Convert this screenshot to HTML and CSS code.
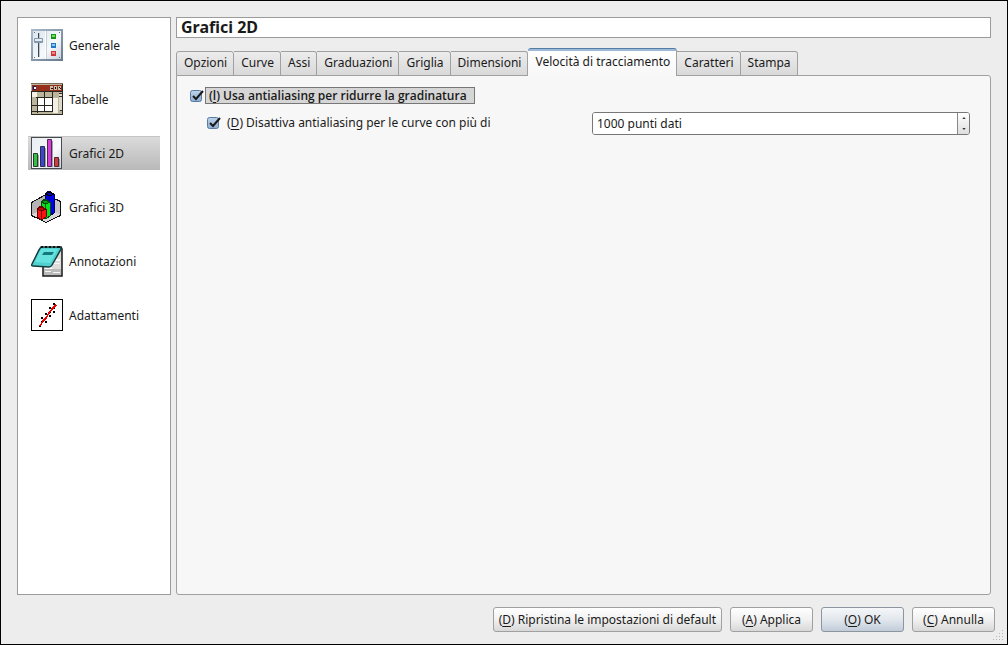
FILE: index.html
```html
<!DOCTYPE html>
<html lang="it">
<head>
<meta charset="utf-8">
<title>Preferenze</title>
<link rel="stylesheet" href="styles.css">
</head>
<body>
<form class="dialog">
  <div class="main">
    <nav class="sections">
      <button type="button" class="section">
        <svg class="icon" viewBox="0 0 32 32" aria-hidden="true">
          <defs>
            <linearGradient id="plate" x1="0" y1="0" x2="1" y2="1"><stop offset="0" stop-color="#dce5ee"/><stop offset=".6" stop-color="#f6f9fb"/><stop offset="1" stop-color="#c8d2dd"/></linearGradient>
            <linearGradient id="rim" x1="0" y1="0" x2="1" y2="1"><stop offset="0" stop-color="#a9bacb"/><stop offset="1" stop-color="#68798c"/></linearGradient>
          </defs>
          <rect width="32" height="32" fill="url(#rim)"/>
          <rect x="2" y="2" width="28" height="28" fill="url(#plate)"/>
          <path d="M14 2h1v28h-1z" fill="#fff"/><path d="M15 2h1v28h-1z" fill="#c6cfd8"/>
          <path d="M3 3h1v1H3zM28 3h1v1h-1zM3 28h1v1H3zM28 28h1v1h-1z" fill="#66717c"/>
          <path d="M7 4h1v24H7z" fill="#3b4650"/><path d="M8 4h1v24H8z" fill="#bcc6cf"/>
          <rect x="3" y="9" width="9" height="5" rx="1" fill="#8597aa"/><rect x="4" y="10" width="7" height="2" fill="#e5edf3"/>
          <rect x="20" y="5" width="5" height="5" fill="#169314"/><rect x="21" y="6" width="3" height="2" fill="#70df5c"/>
          <rect x="20" y="14" width="5" height="5" fill="#2675c9"/><rect x="21" y="15" width="3" height="2" fill="#86c7f4"/>
          <rect x="20" y="22" width="5" height="5" fill="#cc3535"/><rect x="21" y="23" width="3" height="2" fill="#f28b82"/>
        </svg>
        <span>Generale</span>
      </button>
      <button type="button" class="section">
        <svg class="icon" viewBox="0 0 32 32" shape-rendering="crispEdges" aria-hidden="true">
          <path d="M0 0h32v32H0z" fill="#bbb59c"/>
          <path d="M0 0h32v1H0z" fill="#7a6b5d"/>
          <path d="M1 2h30v6H1z" fill="#96301c"/>
          <path d="M2 3h3v4H2z" fill="#171f68"/><path d="M3 4h2v2H3z" fill="#fff"/>
          <path d="M19 3h3v4h-3zM23 3h3v4h-3zM27 3h3v4h-3z" fill="#c8c0aa"/>
          <path d="M20 5h2v1h-2zM24 4h1v2h-1zM28 4h1v1h-1zM29 5h1v1h-1z" fill="#111"/>
          <path d="M1 9h5v5H1z" fill="#f4f1e8"/><path d="M6 15h16v14H6z" fill="#fff"/>
          <path d="M22 15h5v15h-5z" fill="#f2efe4"/><path d="M28 10h3v17h-3z" fill="#ded9c8"/>
          <path d="M0 8h32v1H0zM0 8h1v24H0zM31 1h1v31h-1zM5 14h17v1H5zM1 22h21v1H1zM1 28h21v1H1zM6 14h1v16H6zM13 9h1v20h-1zM21 9h1v20h-1zM0 31h32v1H0z" fill="#29251f"/>
          <path d="M28 10h3v1h-3zM28 13h3v1h-3zM29 27h2v1h-2z" fill="#333"/>
        </svg>
        <span>Tabelle</span>
      </button>
      <button type="button" class="section section-current" aria-current="page">
        <svg class="icon" viewBox="0 0 32 32" aria-hidden="true">
          <defs><linearGradient id="sheet" x1="0" y1="0" x2="1" y2="1"><stop offset="0" stop-color="#e7edf2"/><stop offset=".6" stop-color="#f9fafb"/><stop offset="1" stop-color="#cbd3da"/></linearGradient></defs>
          <rect x=".5" y=".5" width="30" height="31" fill="url(#sheet)" stroke="#464b50"/>
          <path d="M4 18h4v12H4zM11 11h4v19h-4zM18 4h4v26h-4zM25 22h4v8h-4z" fill="#9da3a8"/>
          <path d="M2.500 16.500h4v13h-4z" fill="#37bd45" stroke="#253d2b"/>
          <path d="M9.500 9.500h4v20h-4z" fill="#4145ca" stroke="#2b2c52"/>
          <path d="M16.500 2.500h4v27h-4z" fill="#d93adb" stroke="#4b294c"/>
          <path d="M23.500 20.500h4v9h-4z" fill="#cb3e43" stroke="#50292b"/>
        </svg>
        <span>Grafici 2D</span>
      </button>
      <button type="button" class="section">
        <svg class="icon" viewBox="0 0 32 32" shape-rendering="crispEdges" aria-hidden="true">
          <path d="M0 11 15 3l15 8v13l-15 8L0 24z" fill="#c6c6c6"/>
          <path d="M15 3v14L0 24V11z" fill="#b4b4b4"/><path d="m0 24 15-7 15 7-15 8z" fill="#d9d9d9"/>
          <path d="M.5 11.500 15 3.500l14.500 7v14L15 31.500.500 24.500z" fill="none" stroke="#111"/>
          <path d="m14 3 4-3 5 3v19l-4 3-5-3z" fill="#0000ed" stroke="#000060"/><path d="M18 5h1v20h-1z" fill="#000080"/><path d="m14 3 4-2 5 2-4 2z" fill="#0000b4" stroke="#000"/>
          <path d="m10 11 4-3 5 3v14l-4 3-5-3z" fill="#00e41c" stroke="#004b07"/><path d="M14 13h1v14h-1z" fill="#005509"/><path d="m10 11 4-2 5 2-4 2z" fill="#00a514" stroke="#004b07"/>
          <path d="m6 18 4-3 5 3v8l-5 3-4-3z" fill="#ff1111" stroke="#6c0000"/><path d="M10 19h1v9h-1z" fill="#710000"/><path d="m6 18 4-2 5 2-5 2z" fill="#ce0000" stroke="#600"/>
        </svg>
        <span>Grafici 3D</span>
      </button>
      <button type="button" class="section">
        <svg class="icon" viewBox="0 0 32 32" aria-hidden="true">
          <path d="M12 10 30 2l1 2v27H12z" fill="#ddd" stroke="#171717" stroke-width="1.500"/>
          <path d="M13 24h17v6H13z" fill="#bbb"/><path d="M14 22h7v2h-7zM22 27h7v1h-7zM24 14h5v2h-5zM23 18h6v1h-6zM14 26h6v1h-6z" fill="#f7f7f7"/>
          <path d="m10 2 19 0q2 1 0 4l-8 14q-1 2-3 2L2 21q-2 0-1-2L8 5z" fill="#50d0cf" stroke="#173c3e" stroke-width="1.500"/>
          <path d="m10 4 17 0-8 14L4 17z" fill="#67e3df"/><path d="m13 7 10 0-2 3-10 0z" fill="#16777c"/>
          <path d="M10 1h2v2h-2zM14 1h2v2h-2zM18 1h2v2h-2zM22 1h2v2h-2zM26 1h3v2h-3z" fill="#111"/>
        </svg>
        <span>Annotazioni</span>
      </button>
      <button type="button" class="section">
        <svg class="icon" viewBox="0 0 32 32" shape-rendering="crispEdges" aria-hidden="true">
          <path d="M.5.500h31v31H.500z" fill="#fff" stroke="#000"/>
          <path d="M8 26h2v2H8zM10 18h2v2h-2zM10 22h2v2h-2zM14 22h2v2h-2zM14 18h2v2h-2zM14 14h2v2h-2zM18 16h2v2h-2zM18 8h2v2h-2zM18 12h2v2h-2zM22 4h2v2h-2zM22 12h2v2h-2zM22 8h2v2h-2z" fill="#000"/>
          <path d="m9 27 3-5 3-3 3-5 3-4 4-4" fill="none" stroke="#e80000" stroke-width="1.500"/>
        </svg>
        <span>Adattamenti</span>
      </button>
    </nav>
    <div class="content">
      <h1 class="title">Grafici 2D</h1>
      <div class="tabs" role="tablist">
        <button type="button" role="tab" class="tab">Opzioni</button>
        <button type="button" role="tab" class="tab">Curve</button>
        <button type="button" role="tab" class="tab">Assi</button>
        <button type="button" role="tab" class="tab">Graduazioni</button>
        <button type="button" role="tab" class="tab">Griglia</button>
        <button type="button" role="tab" class="tab">Dimensioni</button>
        <button type="button" role="tab" class="tab tab-current" aria-selected="true">Velocità di tracciamento</button>
        <button type="button" role="tab" class="tab">Caratteri</button>
        <button type="button" role="tab" class="tab">Stampa</button>
      </div>
      <section class="panel" role="tabpanel">
        <div class="option">
          <input type="checkbox" class="check" id="antialias" checked>
          <label class="option-title" for="antialias">(<u>l</u>) Usa antialiasing per ridurre la gradinatura</label>
        </div>
        <div class="suboption">
          <div class="limit">
            <input type="checkbox" class="check" id="disable" checked>
            <label for="disable">(<u>D</u>) Disattiva antialiasing per le curve con più di</label>
          </div>
          <div class="spin">
            <input class="spin-value" type="text" value="1000 punti dati" aria-label="Numero massimo di punti dati">
            <div class="spin-steps">
              <button type="button" class="step" aria-label="Aumenta"><svg viewBox="0 0 5 3" aria-hidden="true"><path d="M0 3 2.500 0 5 3z"/></svg></button>
              <button type="button" class="step" aria-label="Diminuisci"><svg viewBox="0 0 5 3" aria-hidden="true"><path d="M0 0h5L2.500 3z"/></svg></button>
            </div>
          </div>
        </div>
      </section>
    </div>
  </div>
  <footer class="actions">
    <button type="button" class="action">(<u>D</u>) Ripristina le impostazioni di default</button>
    <button type="button" class="action">(<u>A</u>) Applica</button>
    <button type="button" class="action action-default">(<u>O</u>) OK</button>
    <button type="button" class="action">(<u>C</u>) Annulla</button>
  </footer>
  <svg class="grip" viewBox="0 0 11 11" shape-rendering="crispEdges" aria-hidden="true"><path d="M9 0h1v1H9zM9 3h1v1H9zM6 3h1v1H6zM9 6h1v1H9zM6 6h1v1H6zM3 6h1v1H3zM9 9h1v1H9zM6 9h1v1H6zM3 9h1v1H3zM0 9h1v1H0z"/></svg>
</form>
</body>
</html>
```
FILE: styles.css
```css
* { box-sizing: border-box; }

body {
  margin: 0;
  background: #ededed;
  color: #1a1a1a;
  font: 12px/16px "Noto Sans", "Open Sans", sans-serif;
}

button, input { font: inherit; color: inherit; margin: 0; }
button { padding: 0; border: 0; background: none; white-space: nowrap; }
u { text-underline-offset: 2px; }

.dialog {
  position: relative;
  display: flex;
  flex-direction: column;
  gap: 12px;
  min-height: 100vh;
  padding: 16px 12px 12px 16px;
  border: 1px solid #000;
}

.main {
  flex: 1;
  display: flex;
  gap: 5px;
  padding-right: 4px;
}

.sections {
  flex: 0 0 154px;
  display: flex;
  flex-direction: column;
  gap: 20px;
  padding: 10px;
  border: 1px solid #9b9b9b;
  background: #fff;
}

.section {
  display: flex;
  align-items: center;
  gap: 6px;
  height: 34px;
  padding: 0 3px;
}

.section span { padding-top: 2px; }

.section-current {
  background: linear-gradient(#dcdcdc, #b9b9b9);
  box-shadow: inset 0 1px #c4c4c4;
}

.icon { width: 32px; height: 32px; flex: none; }

.content {
  flex: 1;
  display: flex;
  flex-direction: column;
  min-width: 0;
}

.title {
  margin: 0 0 10px;
  padding: 0 4px;
  border: 1px solid #9b9b9b;
  background: #fff;
  font-size: 16px;
  line-height: 19px;
}

.tabs {
  display: flex;
  align-items: flex-end;
  z-index: 1;
  margin-bottom: -1px;
}

.tab {
  height: 25px;
  padding: 0 6px 2px 7px;
  border: 1px solid #a0a0a0;
  border-left-width: 0;
  border-radius: 0 3px 0 0;
  background: linear-gradient(#ececec, #d9d9d9);
}

.tab:first-child { border-left-width: 1px; border-radius: 3px 3px 0 0; }

.tab-current {
  height: 28px;
  border-top: 1px solid #547da4;
  border-bottom: 0;
  border-radius: 3px 3px 0 0;
  background: linear-gradient(#9dbad8 2px, #fff 2px, #f7f7f7);
}

.panel {
  flex: 1;
  padding: 11px 20px 11px 13px;
  border: 1px solid #a0a0a0;
  border-radius: 0 3px 3px 3px;
  background: #f7f7f7;
}

.option, .limit { display: flex; align-items: center; }
.option { gap: 1px; }
.limit { gap: 6px; }

.option-title {
  width: 270px;
  padding: 0 3px;
  border: 1px solid #777;
  background: #d6d6d6;
  font-family: "Open Sans", "Noto Sans", sans-serif;
  font-weight: 600;
  line-height: 15px;
  white-space: nowrap;
}

.suboption {
  display: grid;
  grid-template-columns: 1fr 378px;
  align-items: center;
  margin-top: 8px;
  padding-left: 17px;
}

.limit { padding-bottom: 2px; }

.check {
  appearance: none;
  flex: none;
  width: 14px;
  height: 14px;
  background: url("data:image/svg+xml,%3Csvg xmlns='http://www.w3.org/2000/svg' viewBox='0 0 14 14'%3E%3Cdefs%3E%3ClinearGradient id='g' x2='0' y2='1'%3E%3Cstop stop-color='%23bdd3ea'/%3E%3Cstop offset='1' stop-color='%238dadd0'/%3E%3C/linearGradient%3E%3C/defs%3E%3Crect x='.5' y='1.500' width='11' height='11' rx='2' fill='url(%23g)' stroke='%23587ba1'/%3E%3Cpath d='m3 7 3 3L13 2' fill='none' stroke='%23191919' stroke-width='2'/%3E%3C/svg%3E");
}

.spin {
  display: flex;
  height: 23px;
  border: 1px solid #777;
  border-radius: 3px;
  background: #fff;
  overflow: hidden;
}

.spin-value {
  flex: 1;
  min-width: 0;
  padding: 0 4px;
  border: 0;
  background: #fff;
  outline: 0;
}

.spin-steps {
  display: flex;
  flex-direction: column;
  width: 12px;
  border-left: 1px solid #888;
  background: linear-gradient(#fff, #dedede);
}

.step { flex: 1; display: flex; align-items: center; justify-content: center; }
.step svg { width: 4px; height: 2px; fill: #333; }

.actions {
  display: flex;
  justify-content: flex-end;
  gap: 8px;
}

.action {
  min-width: 83px;
  height: 25px;
  padding: 0 5px;
  border: 1px solid #a0a0a0;
  border-radius: 3px;
  background: linear-gradient(#fff, #f1f1f1 50%, #d8d8d8);
}

.action-default {
  border-color: #8d959f;
  background: linear-gradient(#f5f7f9, #e2e7ed 50%, #c1ccda);
}

.grip {
  position: absolute;
  right: 3px;
  bottom: 3px;
  width: 11px;
  height: 11px;
  fill: #b5b5b5;
}
```
